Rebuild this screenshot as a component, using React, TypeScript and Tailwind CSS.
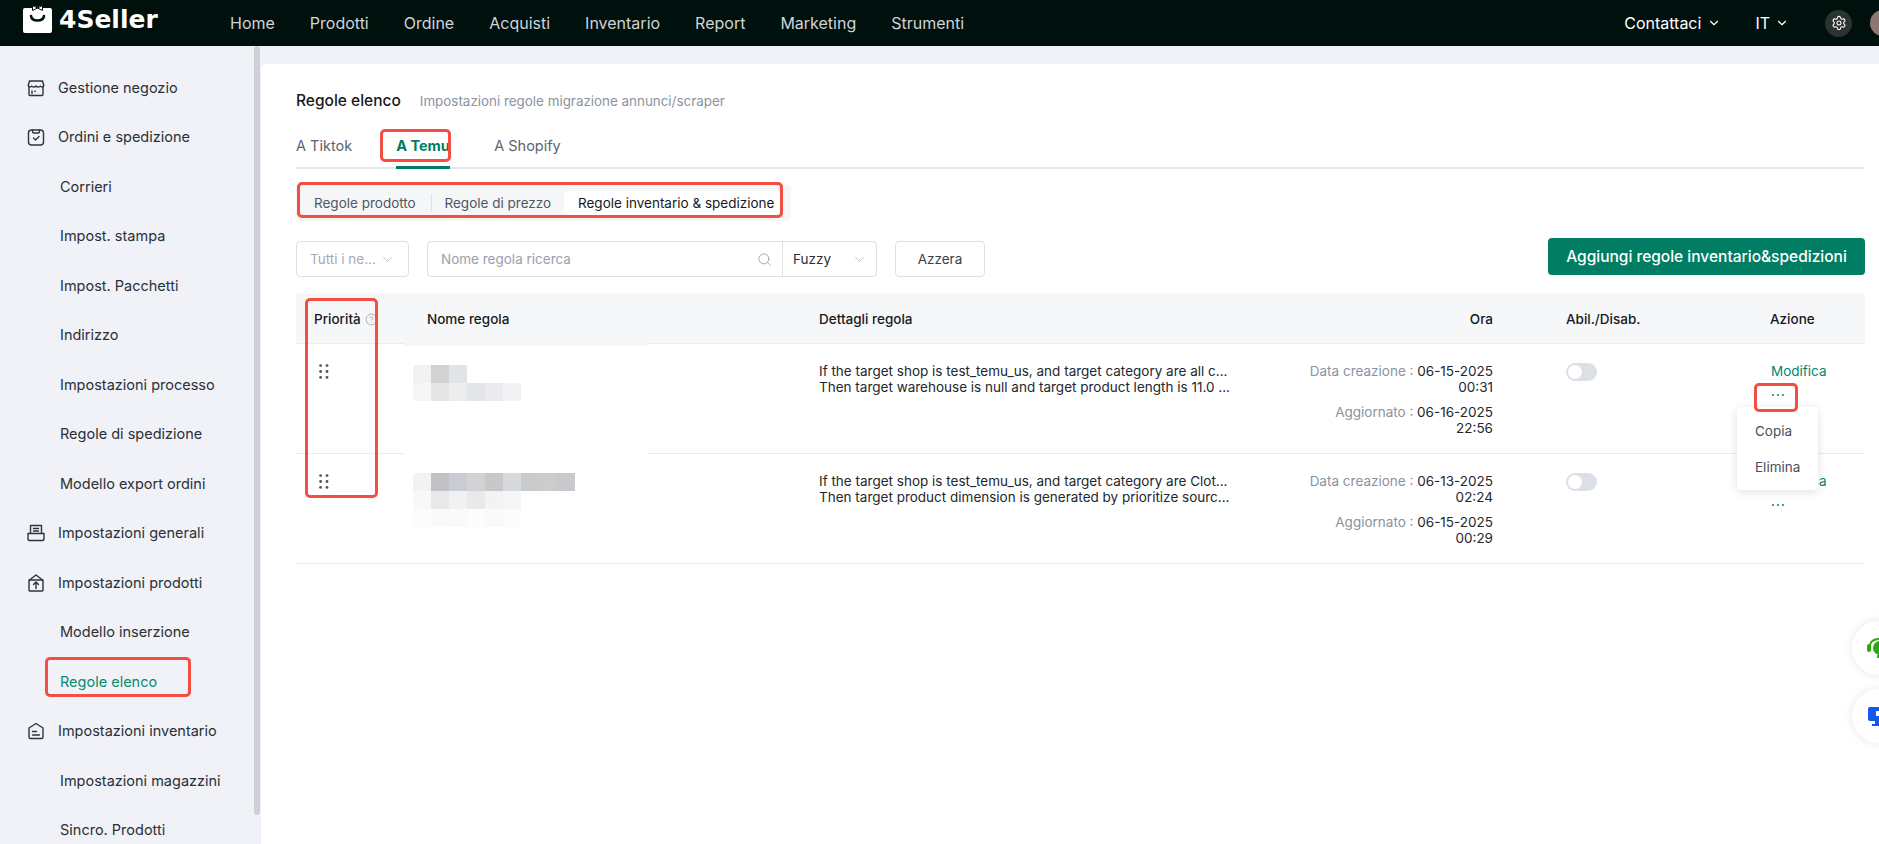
import { ChevronDown, Search, CircleHelp, Settings } from "lucide-react";

const nav = ["Home", "Prodotti", "Ordine", "Acquisti", "Inventario", "Report", "Marketing", "Strumenti"];

const stroke = { fill: "none", stroke: "#2f343c", strokeWidth: 1.4, strokeLinecap: "round", strokeLinejoin: "round" } as const;

function IconStore() {
  return (
    <svg width="20" height="20" viewBox="0 0 20 20" {...stroke}>
      <path d="M3 9v7.500a1 1 0 0 0 1 1h12a1 1 0 0 0 1-1V9" />
      <path d="M3.500 3h13l1.300 4.500c-.3 1.600-2.600 2-3.500.5-.8 1.300-3.300 1.300-4.300 0-1 1.300-3.500 1.300-4.300 0-.9 1.500-3.200 1.100-3.500-.5z" />
      <path d="M6 13v2.500M9 13v.5" />
    </svg>
  );
}
function IconOrder() {
  return (
    <svg width="20" height="20" viewBox="0 0 20 20" {...stroke}>
      <rect x="2.500" y="3" width="15" height="15" rx="3" />
      <path d="M6.500 3v1.500c0 1 .8 1.500 1.500 1.500h4c.8 0 1.500-.5 1.500-1.500V3" />
      <path d="M7.500 11l2 2 3.500-3.500" />
    </svg>
  );
}
function IconGeneral() {
  return (
    <svg width="20" height="20" viewBox="0 0 20 20" {...stroke}>
      <path d="M4.500 10V2.500h11V10" />
      <path d="M7.500 5.500h5M7.500 8h5" />
      <path d="M2 10.500h16v5.500a1.500 1.500 0 0 1-1.500 1.500h-13A1.500 1.500 0 0 1 2 16z" />
    </svg>
  );
}
function IconProduct() {
  return (
    <svg width="20" height="20" viewBox="0 0 20 20" {...stroke}>
      <path d="M3 7h14v10a1 1 0 0 1-1 1H4a1 1 0 0 1-1-1z" />
      <path d="M3.500 7l6.500-5 6.500 5" />
      <path d="M10 15.500v-6M7.500 11.500L10 9l2.500 2.500" />
    </svg>
  );
}
function IconInventory() {
  return (
    <svg width="20" height="20" viewBox="0 0 20 20" {...stroke}>
      <path d="M3 7l7-4.500L17 7v9a1.500 1.500 0 0 1-1.500 1.500h-11A1.500 1.500 0 0 1 3 16z" />
      <path d="M6.500 10.500h4M6.500 14h7" />
    </svg>
  );
}

const side: { label: string; icon?: () => React.ReactNode; active?: boolean }[] = [
  { label: "Gestione negozio", icon: IconStore },
  { label: "Ordini e spedizione", icon: IconOrder },
  { label: "Corrieri" },
  { label: "Impost. stampa" },
  { label: "Impost. Pacchetti" },
  { label: "Indirizzo" },
  { label: "Impostazioni processo" },
  { label: "Regole di spedizione" },
  { label: "Modello export ordini" },
  { label: "Impostazioni generali", icon: IconGeneral },
  { label: "Impostazioni prodotti", icon: IconProduct },
  { label: "Modello inserzione" },
  { label: "Regole elenco", active: true },
  { label: "Impostazioni inventario", icon: IconInventory },
  { label: "Impostazioni magazzini" },
  { label: "Sincro. Prodotti" },
];

const blur1 = [
  ["bg-[#f2f2f2]", "bg-[#d2d2d2]", "bg-[#e2e5e8]"],
  ["bg-[#f6f6f6]", "bg-[#e5e5e6]", "bg-[#eceded]", "bg-[#e4e5e8]", "bg-[#ebebed]", "bg-[#f2f3f5]"],
];
const blur2 = [
  ["bg-[#f3f3f2]", "bg-[#c2c1c5]", "bg-[#c9cdd3]", "bg-[#d2d2d2]", "bg-[#c8c8ca]", "bg-[#d6dade]", "bg-[#cbcbcd]", "bg-[#cbcccc]", "bg-[#c8c9cd]"],
  ["bg-[#f8f8f8]", "bg-[#e9e9eb]", "bg-[#f0f1f2]", "bg-[#e8e9eb]", "bg-[#f3f3f4]", "bg-[#f5f6f8]"],
  ["bg-[#fcfcfc]", "bg-[#fafafa]", "bg-[#f9f9f9]", "bg-[#fbfcfc]", "bg-[#f9f9f9]", "bg-[#fbfcfc]"],
];

const rows = [
  {
    blur: blur1,
    blurTop: "pt-[21px]",
    l1: "If the target shop is test_temu_us, and target category are all c...",
    l2: "Then target warehouse is null and target product length is 11.0 ...",
    c: "06-15-2025",
    ct: "00:31",
    u: "06-16-2025",
    ut: "22:56",
  },
  {
    blur: blur2,
    blurTop: "pt-[19px]",
    l1: "If the target shop is test_temu_us, and target category are Clot...",
    l2: "Then target product dimension is generated by prioritize sourc...",
    c: "06-13-2025",
    ct: "02:24",
    u: "06-15-2025",
    ut: "00:29",
  },
];

const gridCols = "grid grid-cols-[112px_393px_499px_211px_242px_112px]";

function Dots() {
  return (
    <svg width="10" height="15" viewBox="0 0 10 15" fill="#4b5563">
      <circle cx="1.600" cy="1.600" r="1.400" />
      <circle cx="8" cy="1.600" r="1.400" />
      <circle cx="1.600" cy="7.500" r="1.400" />
      <circle cx="8" cy="7.500" r="1.400" />
      <circle cx="1.600" cy="13.400" r="1.400" />
      <circle cx="8" cy="13.400" r="1.400" />
    </svg>
  );
}

function RedBox({ className }: { className: string }) {
  return <div className={"absolute z-20 rounded-[5px] border-[3px] border-[#f44e42] pointer-events-none " + className} />;
}

export default function App() {
  return (
    <div className="relative h-[844px] w-full overflow-hidden bg-[#f0f2f7] font-['Inter',sans-serif] text-[14px] text-[#23272e]">
      {/* top bar */}
      <header className="flex h-[46px] items-center bg-[#00100c] pl-[23px]">
        <div className="flex w-[207px] items-center gap-[7px]">
          <svg width="29" height="28" viewBox="0 0 29 28" className="-mt-[9px]">
            <path d="M2 3h7.500L12 1l2.500 1.800L17 1l2.500 2H27a2 2 0 0 1 2 2v21a2 2 0 0 1-2 2H2a2 2 0 0 1-2-2V5a2 2 0 0 1 2-2z" fill="#fff" />
            <path d="M9.500 0.500l5 2.500 5-2.500v5l-5-2.500-5 2.500z" fill="#fff" stroke="#00100c" strokeWidth="1" />
            <path d="M8 11c1 6 12 6 13 0" fill="none" stroke="#00100c" strokeWidth="2.600" strokeLinecap="round" />
          </svg>
          <span className="-mt-[7px] font-['DejaVu_Sans',sans-serif] text-[25px] font-bold leading-none text-white">4Seller</span>
        </div>
        <nav className="flex gap-[35px] text-[16px] text-[#cfd4d8]">
          {nav.map((n) => (
            <span key={n}>{n}</span>
          ))}
        </nav>
        <div className="ml-auto flex items-center text-[16px] text-white">
          <span>Contattaci</span>
          <ChevronDown size={14} className="ml-[6px]" />
          <span className="ml-[34px]">IT</span>
          <ChevronDown size={14} className="ml-[5px]" />
          <span className="ml-[36px] flex h-[27px] w-[27px] items-center justify-center rounded-full bg-[#2b3331]">
            <Settings size={16} strokeWidth={1.6} />
          </span>
          <span className="ml-[18px] -mr-[18px] h-[26px] w-[27px] rounded-full bg-[#8d7770]" />
        </div>
      </header>

      <div className="flex h-[798px]">
        {/* sidebar */}
        <aside className="relative w-[260px] shrink-0 overflow-hidden pt-[17px]">
          {side.map((s) =>
            s.icon ? (
              <div key={s.label} className="flex h-[49.5px] items-center pl-[26px] text-[14.500px] text-[#2b2f36]">
                <span className="mr-[12px] flex w-[20px] justify-center">
                  <s.icon />
                </span>
                {s.label}
              </div>
            ) : (
              <div
                key={s.label}
                className={"flex h-[49.5px] items-center pl-[60px] text-[14.500px] " + (s.active ? "text-[#0a8a6c]" : "text-[#2b2f36]")}
              >
                {s.label}
              </div>
            )
          )}
          <div className="absolute right-0 top-0 h-[769px] w-[6px] rounded-[3px] bg-[#cdd0d4]" />
        </aside>

        {/* main */}
        <main className="min-w-0 flex-1 pl-[1px] pt-[18px]">
          <div className="h-full rounded-tl-[6px] bg-white pl-[35px] pr-[14px] pt-[27px]">
            <div className="flex h-[20px] items-center">
              <span className="text-[15.500px] font-medium text-[#17191d]">Regole elenco</span>
              <span className="ml-[19px] text-[13.400px] text-[#8a93a0]">Impostazioni regole migrazione annunci/scraper</span>
            </div>

            {/* tabs */}
            <div className="mt-[14px] flex h-[44px] border-b-2 border-[#e4e7ec] text-[14.500px] text-[#5c6470]">
              <span className="pt-[10px]">A Tiktok</span>
              <span className="relative ml-[44px] -mb-[2px] h-[44px] w-[54px] overflow-hidden border-b-[3px] border-[#007d63] pt-[10px] font-bold whitespace-nowrap text-[#007d63]">
                A Temu
              </span>
              <span className="ml-[44px] pt-[10px]">A Shopify</span>
            </div>

            {/* segmented */}
            <div className="mt-[16px] flex h-[36px] w-[495px] items-center rounded-[5px] bg-[#f5f6f8] pl-[18px] text-[13.500px] text-[#4f5663]">
              <span className="flex h-full w-[116.500px] items-center">Regole prodotto</span>
              <span className="h-[18px] w-px bg-[#dfe2e8]" />
              <span className="flex h-full w-[132.500px] items-center pl-[13px]">Regole di prezzo</span>
              <span className="flex h-[24px] w-[216px] items-center rounded-[4px] bg-white pl-[14px] text-[#17191d]">
                Regole inventario &amp; spedizione
              </span>
            </div>

            {/* filters */}
            <div className="mt-[20px] flex h-[36px] items-center text-[13.500px]">
              <div className="flex h-[36px] w-[113px] items-center justify-between rounded-[4px] border border-[#dcdfe6] pl-[13px] pr-[13px] text-[#a6abb3]">
                <span>Tutti i ne...</span>
                <ChevronDown size={15} strokeWidth={1.2} />
              </div>
              <div className="ml-[18px] flex h-[36px] w-[450px] items-center rounded-[4px] border border-[#dcdfe6]">
                <span className="flex-1 pl-[13px] text-[#9aa0a8]">Nome regola ricerca</span>
                <Search size={15} strokeWidth={1.2} className="mr-[10px] text-[#8a9098]" />
                <div className="flex h-full w-[94px] items-center justify-between border-l border-[#dcdfe6] pl-[10px] pr-[9px] text-[#2b2f36]">
                  <span>Fuzzy</span>
                  <ChevronDown size={15} strokeWidth={1.2} className="text-[#a6abb3]" />
                </div>
              </div>
              <div className="ml-[18px] flex h-[36px] w-[90px] items-center justify-center rounded-[4px] border border-[#dcdfe6] text-[#3b4048]">
                Azzera
              </div>
              <div className="ml-auto -mt-[5px] flex h-[37px] w-[317px] items-center justify-center rounded-[4px] bg-[#007d63] text-[15.500px] font-medium text-white">
                Aggiungi regole inventario&amp;spedizioni
              </div>
            </div>

            {/* table */}
            <div className="mt-[16px]">
              <div className={gridCols + " h-[51px] items-center border-b border-[#e8ebf2] bg-[#f6f7f9] pt-[2px] text-[13.500px] font-medium text-[#17191d]"}>
                <div className="flex items-center pl-[18px]">
                  Priorità
                  <CircleHelp size={13} strokeWidth={1.3} className="ml-[4px] text-[#8a9098]" />
                </div>
                <div className="pl-[19px]">Nome regola</div>
                <div className="pl-[18px]">Dettagli regola</div>
                <div className="pr-[18px] text-right">Ora</div>
                <div className="pl-[55px]">Abil./Disab.</div>
                <div className="pl-[17px]">Azione</div>
              </div>

              {rows.map((r, i) => (
                <div key={i} className={gridCols + " h-[110px] border-b border-[#e8ebf2] text-[13.500px] text-[#23272e]"}>
                  <div className="pl-[23px] pt-[20px]">
                    <Dots />
                  </div>
                  <div className="relative">
                    {i === 0 && (
                      <>
                        <div className="absolute -left-[4px] right-[153px] -bottom-px -top-[1px] z-0 bg-white" />
                        <div className="absolute -left-[4px] right-[153px] -top-[1px] z-0 h-[3px] bg-[#f6f7f9]" />
                      </>
                    )}
                    <div className={"relative flex flex-col pl-[5px] " + r.blurTop}>
                      {r.blur.map((line, li) => (
                        <div key={li} className="flex">
                          {line.map((c, ci) => (
                            <span key={ci} className={"h-[18px] w-[18px] " + c} />
                          ))}
                        </div>
                      ))}
                    </div>
                  </div>
                  <div className="pl-[18px] pt-[19px] leading-[16px] whitespace-nowrap">
                    <div>{r.l1}</div>
                    <div>{r.l2}</div>
                  </div>
                  <div className="pr-[18px] pt-[19px] text-right leading-[16px] whitespace-nowrap">
                    <div>
                      <span className="text-[#8a93a0]">Data creazione : </span>
                      {r.c}
                    </div>
                    <div>{r.ct}</div>
                    <div className="mt-[9px]">
                      <span className="text-[#8a93a0]">Aggiornato : </span>
                      {r.u}
                    </div>
                    <div>{r.ut}</div>
                  </div>
                  <div className="pl-[55px] pt-[19px]">
                    <div className="flex h-[18px] w-[31px] items-center rounded-full bg-[#dcdfe6] pl-[2px]">
                      <span className="h-[14px] w-[14px] rounded-full bg-white" />
                    </div>
                  </div>
                  <div className="relative pl-[18px] pt-[19px] leading-[16px] text-[#008577]">
                    <div>Modifica</div>
                    <div className="mt-[11px] flex gap-[3px] pl-[1px] pt-[4px]">
                      <span className="h-[2px] w-[2px] rounded-full bg-[#008577]" />
                      <span className="h-[2px] w-[2px] rounded-full bg-[#008577]" />
                      <span className="h-[2px] w-[2px] rounded-full bg-[#008577]" />
                    </div>
                    {i === 0 && (
                      <div className="absolute left-[-16px] top-[63px] z-10 flex h-[83px] w-[81px] flex-col rounded-[4px] bg-white pl-[18px] text-[13.500px] text-[#4a4f57] shadow-[0_2px_10px_rgba(0,0,0,0.12)]">
                        <span className="flex h-[42px] items-center pt-[6px]">Copia</span>
                        <span className="flex h-[36px] items-center">Elimina</span>
                      </div>
                    )}
                  </div>
                </div>
              ))}
            </div>
          </div>
        </main>
      </div>

      {/* floating widgets */}
      <div className="absolute left-[1852px] top-[621px] z-10 flex h-[54px] w-[54px] items-center rounded-full bg-white pl-[15px] shadow-[0_0_10px_rgba(0,0,0,0.1)]">
        <svg width="24" height="24" viewBox="0 0 24 24" fill="#2aa80f">
          <rect x="0" y="8" width="4" height="8" rx="2" />
          <path d="M3 9c1-7 14-8 18-3" fill="none" stroke="#2aa80f" strokeWidth="1.800" />
          <circle cx="13" cy="12" r="7" />
          <rect x="10" y="19" width="4" height="3" rx="1" />
        </svg>
      </div>
      <div className="absolute left-[1852px] top-[689px] z-10 flex h-[54px] w-[54px] items-center rounded-full bg-white pl-[16px] shadow-[0_0_10px_rgba(0,0,0,0.1)]">
        <svg width="24" height="24" viewBox="0 0 24 24" fill="#1657f0">
          <rect x="0" y="3" width="24" height="14" rx="2" />
          <rect x="8" y="7" width="12" height="5" fill="#fff" />
          <rect x="4" y="20" width="10" height="2" />
          <rect x="7" y="17" width="4" height="4" />
        </svg>
      </div>

      {/* red annotations */}
      <RedBox className="left-[45px] top-[657px] h-[40px] w-[146px]" />
      <RedBox className="left-[380px] top-[129px] h-[33px] w-[71px]" />
      <RedBox className="left-[297px] top-[182px] h-[36px] w-[486px]" />
      <RedBox className="left-[305px] top-[298px] h-[200px] w-[73px]" />
      <RedBox className="left-[1754px] top-[383px] h-[29px] w-[44px]" />
    </div>
  );
}
